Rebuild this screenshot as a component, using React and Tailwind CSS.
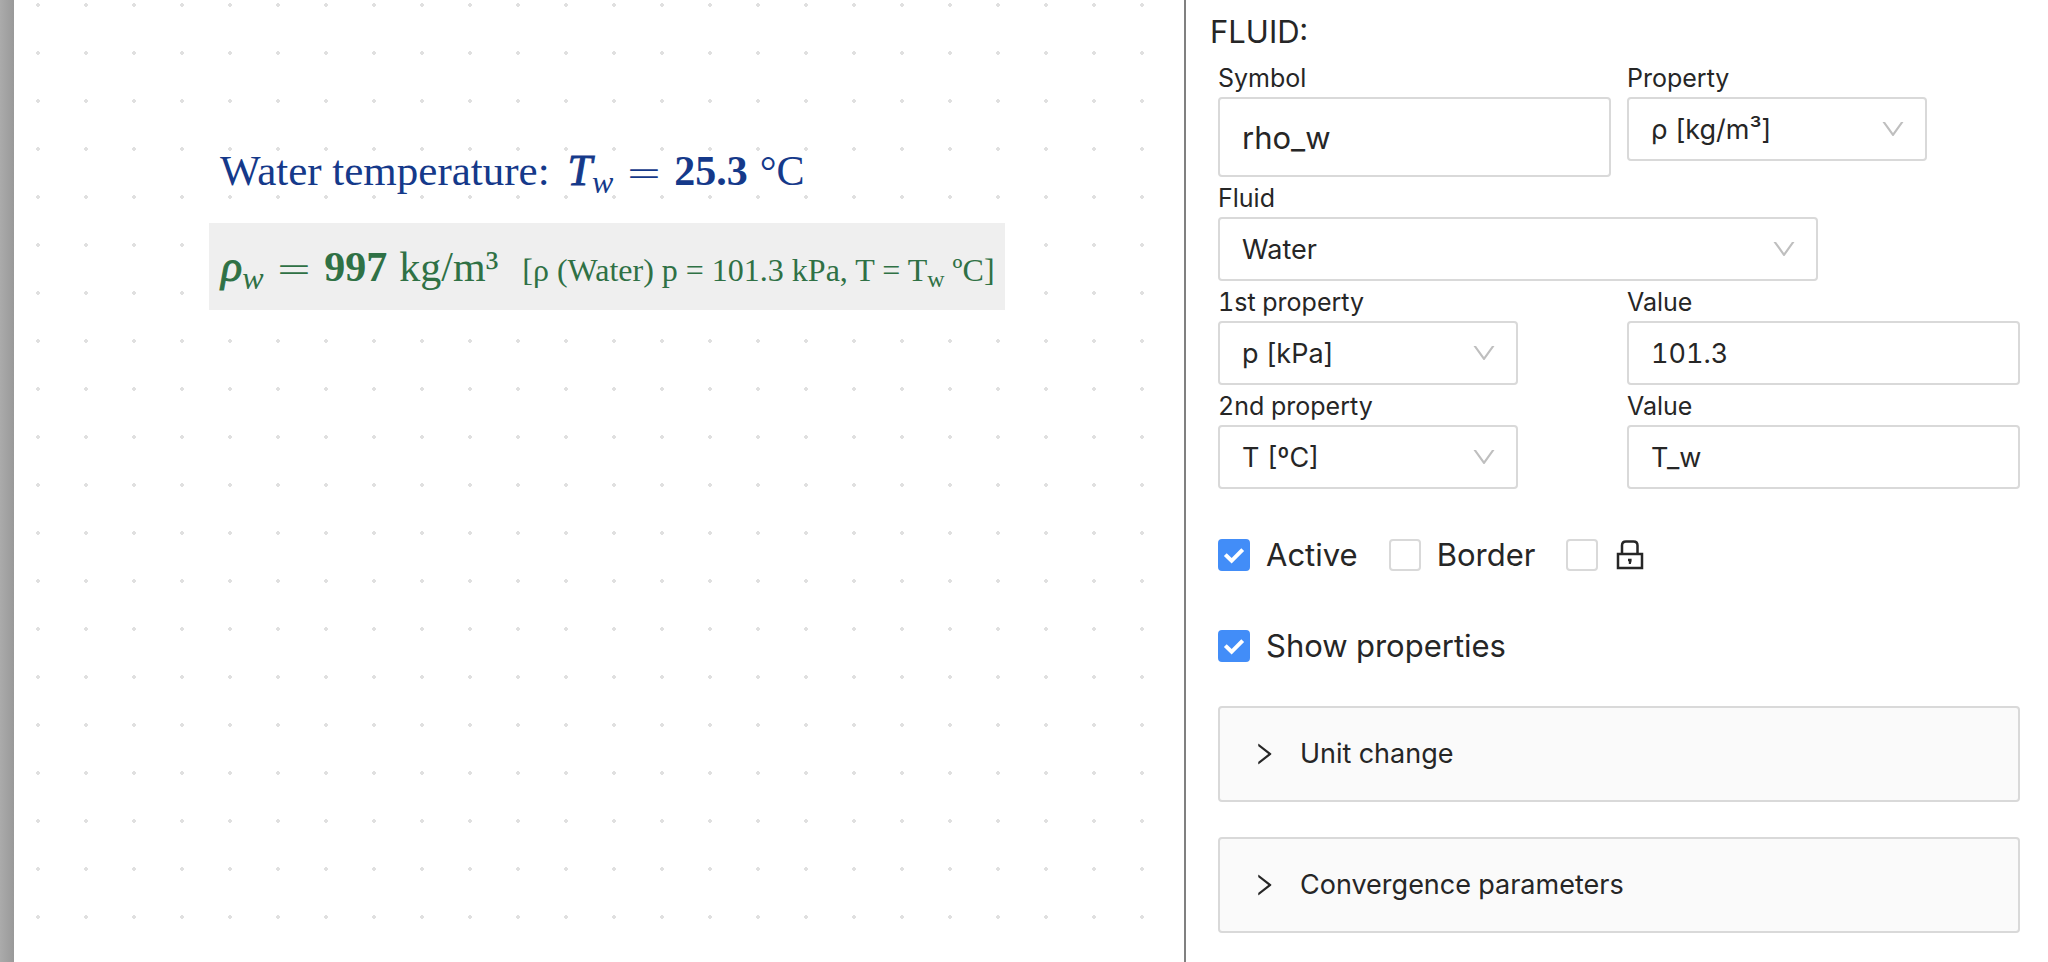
import { useState } from "react";
import { AiOutlineDown, AiOutlineRight } from "react-icons/ai";

const fieldBox = "w-full rounded border-2 border-[#d9d9d9] bg-white px-[22px] outline-none";

function Field({ id, label, className, children }) {
  return (
    <div className={className}>
      <label htmlFor={id} className="block pt-0.5 text-[25px] leading-[38px]">
        {label}
      </label>
      {children}
    </div>
  );
}

function SelectField({ id, label, options, className }) {
  return (
    <Field id={id} label={label} className={className}>
      <div className="relative">
        <select id={id} className={`${fieldBox} block h-16 appearance-none pt-0.5 text-[27px]`}>
          {options.map((option) => (
            <option key={option}>{option}</option>
          ))}
        </select>
        <AiOutlineDown
          size={28}
          className="pointer-events-none absolute top-1/2 right-5 -translate-y-1/2 text-[#bfbfbf]"
        />
      </div>
    </Field>
  );
}

function TextField({ id, label, value, large }) {
  return (
    <Field id={id} label={label}>
      <input
        id={id}
        type="text"
        defaultValue={value}
        className={`${fieldBox} block ${large ? "h-20 text-[31px]" : "h-16 text-[27px]"}`}
      />
    </Field>
  );
}

function CheckField({ label, initial = false, children }) {
  const [checked, setChecked] = useState(initial);
  return (
    <label className="flex items-center gap-4 text-[31px] leading-10">
      <span className="relative block size-8">
        <input
          type="checkbox"
          aria-label={label}
          checked={checked}
          onChange={(event) => setChecked(event.target.checked)}
          className="block size-8 appearance-none rounded border-2 border-[#d9d9d9] bg-white checked:border-[#428df8] checked:bg-[#428df8]"
        />
        {checked && (
          <svg
            viewBox="0 0 32 32"
            className="pointer-events-none absolute inset-0 size-8"
            fill="none"
            stroke="#fff"
            strokeWidth="4"
          >
            <path d="M7.3 15.6 L13.6 21.8 L24.7 10.6" />
          </svg>
        )}
      </span>
      {children ?? <span>{label}</span>}
    </label>
  );
}

function LockIcon() {
  return (
    <svg width="32" height="32" viewBox="0 0 32 32" fill="none" stroke="#262626" strokeWidth="2.5">
      <path d="M8 15V6.500C8 4 9.500 2.500 12 2.500H19.500C22 2.500 23.500 4 23.500 6.500V15" />
      <path d="M4 15H28V29H4Z" />
      <path d="M14 19.800H17.600V22L16.800 25H14.800V22.500L14 22Z" fill="#262626" stroke="none" />
    </svg>
  );
}

function CollapseRow({ children }) {
  return (
    <button
      type="button"
      className="flex h-24 w-full items-center gap-[22px] rounded border-2 border-[#d9d9d9] bg-[#fafafa] px-[30px] text-left text-[27px]"
    >
      <AiOutlineRight size={28} />
      {children}
    </button>
  );
}

function Variable({ name, sub }) {
  return (
    <span className="italic">
      <span className="text-[44px] [-webkit-text-stroke:1px_currentColor]">{name}</span>
      <sub className="text-[32px]">{sub}</sub>
    </span>
  );
}

function Equals() {
  return (
    <span className="px-3">
      <span className="align-[-3px] font-['DejaVu_Sans',sans-serif] text-[44px] font-extralight">=</span>
    </span>
  );
}

function Canvas() {
  return (
    <main className="relative min-w-0 overflow-hidden bg-[radial-gradient(circle,#e0e0e0_2px,transparent_2px)] bg-[length:48px_48px] bg-[position:0_-19px] font-['Liberation_Serif',serif] text-[42px] leading-[60px] whitespace-nowrap">
      <div className="absolute top-[141px] left-[206px] flex items-baseline text-[#15398a]">
        <span className="pr-[18px] text-[43px]">Water temperature:</span>
        <Variable name="T" sub="w" />
        <Equals />
        <b>25.3</b>
        <span className="pl-3">°C</span>
      </div>
      <div className="absolute top-[223px] left-[195px] flex h-[87px] items-baseline bg-[#efefef] pt-3.5 pr-2.5 pl-3 text-[#2f7145]">
        <Variable name="ρ" sub="w" />
        <Equals />
        <b>997</b>
        <span className="pl-3">kg/m³</span>
        <span className="pl-6 text-[32px]">
          [ρ (Water) p = 101.3 kPa, T = T<sub className="text-[24px]">w</sub> ºC]
        </span>
      </div>
    </main>
  );
}

export default function App() {
  return (
    <div className="grid min-h-screen grid-cols-[37fr_27fr] bg-white">
      <div className="grid min-w-0 grid-cols-[14px_1fr]">
        <div className="bg-linear-to-r from-[#ababab] to-[#999999]" />
        <Canvas />
      </div>
      <aside className="min-w-0 border-l-2 border-[#808080] pr-7 pl-8 font-['Inter',sans-serif] text-[#262626] tabular-nums">
        <h1 className="-ml-2 pt-2 pb-px text-[31px] leading-[48px]">FLUID:</h1>
        <div className="grid grid-cols-2 items-start gap-x-4">
          <TextField id="symbol" label="Symbol" value="rho_w" large />
          <SelectField id="property" label="Property" options={["ρ [kg/m³]"]} className="w-[300px]" />
          <SelectField id="fluid" label="Fluid" options={["Water"]} className="col-span-2 w-[600px]" />
          <SelectField id="first" label="1st property" options={["p [kPa]"]} className="w-[300px]" />
          <TextField id="first-value" label="Value" value="101.3" />
          <SelectField id="second" label="2nd property" options={["T [ºC]"]} className="w-[300px]" />
          <TextField id="second-value" label="Value" value="T_w" />
        </div>
        <div className="flex gap-[31px] pt-[46px]">
          <CheckField label="Active" initial />
          <CheckField label="Border" />
          <CheckField label="Lock">
            <LockIcon />
          </CheckField>
        </div>
        <div className="flex pt-[51px]">
          <CheckField label="Show properties" initial />
        </div>
        <div className="flex flex-col gap-[35px] pt-10">
          <CollapseRow>Unit change</CollapseRow>
          <CollapseRow>Convergence parameters</CollapseRow>
        </div>
      </aside>
    </div>
  );
}
